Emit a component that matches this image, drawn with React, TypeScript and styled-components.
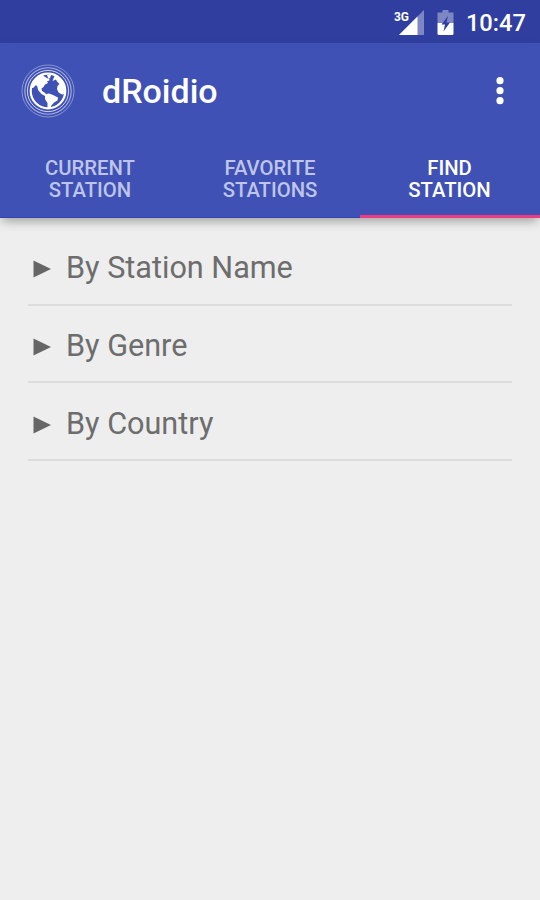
import React from "react";
import styled, { createGlobalStyle } from "styled-components";

const GlobalStyle = createGlobalStyle`
  * { box-sizing: border-box; }
  body { margin: 0; background: #eeeeee; font-family: Roboto, sans-serif; }
`;

const Screen = styled.div`
  width: 540px;
  height: 900px;
  display: flex;
  flex-direction: column;
  overflow: hidden;
  background: #eeeeee;
`;

const StatusBar = styled.div`
  height: 43px;
  flex: none;
  display: flex;
  align-items: center;
  justify-content: flex-end;
  padding: 3px 14px 0 0;
  background: #303f9f;
  color: #fff;
`;

const SignalIcon = styled.svg`
  width: 32px;
  height: 28px;
  margin: -4px 12px 0 0;
`;

const NetworkLabel = styled.text`
  font: 700 12px Roboto, sans-serif;
  fill: #fff;
`;

const BatteryIcon = styled.svg`
  width: 17px;
  height: 28px;
  margin: -4px 12px 0 0;
`;

const Clock = styled.time`
  font-size: 23.7px;
  font-weight: 500;
  line-height: 28px;
`;

const Header = styled.header`
  height: 175px;
  flex: none;
  display: flex;
  flex-direction: column;
  background: #3f51b5;
  box-shadow: 0 5px 10px -2px rgba(0, 0, 0, 0.34);
`;

const Toolbar = styled.div`
  height: 96px;
  display: flex;
  align-items: center;
  padding: 0 34px 0 20px;
  color: #fff;
`;

const GlobeIcon = styled.svg`
  width: 56px;
  height: 56px;
`;

const Title = styled.h1`
  flex: 1;
  margin: 0 0 1px 26px;
  font-size: 34px;
  font-weight: 500;
  line-height: 40px;
`;

const Overflow = styled.svg`
  width: 12px;
  height: 32px;
`;

const Tabs = styled.nav`
  flex: 1;
  display: grid;
  grid-template-columns: repeat(3, 1fr);
`;

const Tab = styled.div<{ $active?: boolean }>`
  display: flex;
  justify-content: center;
  padding: 18px ${(p) => (p.$active ? "1px" : "0")} 0 0;
  border-bottom: ${(p) => (p.$active ? "3px solid #ee3b80" : "1px solid #3145ae")};
  color: ${(p) => (p.$active ? "#fff" : "#bec5e8")};
  font-size: 20.3px;
  font-weight: 500;
  line-height: 22px;
  text-align: center;
  white-space: pre-line;
`;

const List = styled.main`
  padding: 10px 28px 0;
`;

const Row = styled.div`
  height: 77.7px;
  display: flex;
  align-items: center;
  padding: 5px 0 0 5px;
  border-bottom: 2px solid #dcdcdc;
  color: #6d6d6d;
  font-size: 30.6px;
  line-height: 36px;
`;

const Arrow = styled.svg`
  width: 18px;
  height: 18px;
  margin: 2px 15px 0 0;
  fill: #666;
`;

const tabs = ["CURRENT\nSTATION", "FAVORITE\nSTATIONS", "FIND\nSTATION"];
const searches = ["By Station Name", "By Genre", "By Country"];

export default function App() {
  return (
    <>
      <GlobalStyle />
      <Screen>
        <StatusBar>
          <SignalIcon viewBox="0 0 32 28">
            <path d="M31 3V28H6Z" fill="#7d87c4" />
            <path d="M24.5 9.5V28H6Z" fill="#fff" />
            <NetworkLabel x="1" y="14" textLength="15" lengthAdjust="spacingAndGlyphs">3G</NetworkLabel>
          </SignalIcon>
          <BatteryIcon viewBox="0 0 17 28">
            <path d="M5.5 3H11.5V5.5H16.5V16H.5V5.5H5.5Z" fill="#7d87c4" />
            <path d="M.5 16H16.5V26.5Q16.5 28 15 28H2Q.5 28 .5 26.5Z" fill="#fff" />
            <path d="M11 9L4.5 17.5H8L6.5 24.5L13 15.5H9.5Z" fill="#303f9f" />
          </BatteryIcon>
          <Clock>10:47</Clock>
        </StatusBar>
        <Header>
          <Toolbar>
            <GlobeIcon viewBox="0 0 56 56">
              <g fill="none" stroke="#fff">
                <circle cx="28" cy="28" r="26" strokeWidth="1" opacity=".38" />
                <circle cx="28" cy="28" r="23.2" strokeWidth="1.1" opacity=".55" />
                <circle cx="28" cy="28" r="20.6" strokeWidth="1" opacity=".75" />
                <circle cx="28" cy="28" r="17.3" strokeWidth="2.2" />
              </g>
              <path fill="#fff" d="M11 25L13 19L18 13.5L23 12L25 14L28 15.5L30 17L27 18.5L28 20L25 21.5L23.5 24L21.5 25.5L22 28L24.5 29.5L26 31L29 30.5L33 32L38 34.5L37.5 37.5L34 39.5L31.5 42.5L30 46L27.5 45L27.5 40L25 36L25 33L21.5 31L18 27L17.5 24L16 22L13 25Z" />
              <path fill="#fff" d="M35 12L40 14.5L43.5 19L45.5 25L45 31L42 31.5L38.5 29.5L37 26L37.5 23L39.5 21L37 18.5L36 16.5L32.5 18L33.5 15.5Z" />
              <path fill="#fff" d="M27 12H31L30 15L28.5 16Z" />
            </GlobeIcon>
            <Title>dRoidio</Title>
            <Overflow viewBox="0 0 12 32" fill="#fff">
              <circle cx="6" cy="5.7" r="3.6" />
              <circle cx="6" cy="15.7" r="3.6" />
              <circle cx="6" cy="25.7" r="3.6" />
            </Overflow>
          </Toolbar>
          <Tabs>
            {tabs.map((label, i) => (
              <Tab key={label} $active={i === 2}>{label}</Tab>
            ))}
          </Tabs>
        </Header>
        <List>
          {searches.map((label) => (
            <Row key={label}>
              <Arrow viewBox="0 0 18 18"><path d="M0.5 0.5V17.5L18 9Z" /></Arrow>
              {label}
            </Row>
          ))}
        </List>
      </Screen>
    </>
  );
}
